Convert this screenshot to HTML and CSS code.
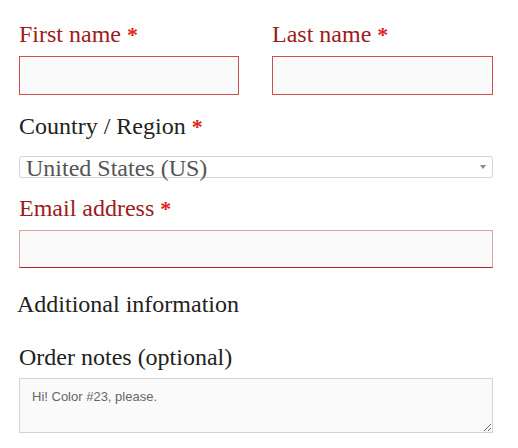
FILE: index.html
```html
<!DOCTYPE html>
<html lang="en">
<head>
    <meta charset="UTF-8">
    <meta name="viewport" content="width=device-width, initial-scale=1.0">
    <title>Checkout fields</title>
    <link rel="stylesheet" href="styles.css">
</head>
<body>
    <form class="checkout">
        <div class="name-row">
            <div class="field">
                <label class="field-label invalid" for="first-name">First name <abbr class="required">*</abbr></label>
                <input class="text-input invalid" id="first-name" type="text">
            </div>
            <div class="field">
                <label class="field-label invalid" for="last-name">Last name <abbr class="required">*</abbr></label>
                <input class="text-input invalid" id="last-name" type="text">
            </div>
        </div>

        <div class="field">
            <label class="field-label select-label">Country / Region <abbr class="required">*</abbr></label>
            <div class="select-box">
                <span class="select-value">United States (US)</span>
                <span class="select-arrow"></span>
            </div>
        </div>

        <div class="field">
            <label class="field-label invalid" for="email">Email address <abbr class="required">*</abbr></label>
            <input class="text-input email-input" id="email" type="email">
        </div>

        <h3 class="section-title">Additional information</h3>

        <div class="field">
            <label class="field-label notes-label" for="notes">Order notes (optional)</label>
            <textarea class="notes" id="notes">Hi! Color #23, please.</textarea>
        </div>
    </form>
</body>
</html>
```

FILE: styles.css
```css
/* Basic Reset */
* {
    margin: 0;
    padding: 0;
    box-sizing: border-box;
}

body {
    font-family: 'Liberation Serif', 'Times New Roman', serif;
    background: #fff;
    color: #222;
}

.checkout {
    width: 493px;
    padding: 19px 0 0 19px;
}

.name-row {
    display: grid;
    grid-template-columns: 220px 221px;
    column-gap: 33px;
    margin-bottom: 16px;
}

.field-label {
    display: block;
    height: 30px;
    font-size: 24px;
    line-height: 30px;
    color: #222;
    margin-bottom: 7px;
    white-space: nowrap;
}

.field-label.invalid {
    color: #9e1b1b;
}

.required {
    color: #e2231a;
    text-decoration: none;
    font-weight: bold;
    font-size: 22px;
    line-height: 1;
}

.text-input {
    display: block;
    width: 100%;
    height: 39px;
    background: #fafafa;
    border: 1px solid #cf4f4f;
    outline: none;
}

.select-label {
    margin-bottom: 15px;
}

.select-box {
    display: flex;
    align-items: flex-start;
    justify-content: space-between;
    height: 22px;
    padding: 0 6px;
    border: 1px solid #d4d4d4;
    border-radius: 3px;
    margin-bottom: 15px;
}

.select-value {
    font-size: 24px;
    line-height: 23px;
    color: #555;
    white-space: nowrap;
}

.select-arrow {
    width: 0;
    height: 0;
    margin-top: 8px;
    border-left: 3px solid transparent;
    border-right: 3px solid transparent;
    border-top: 4px solid #888;
}

.email-input {
    height: 38px;
    border-color: #dca3a3;
    border-bottom-color: #b32020;
}

.section-title {
    font-size: 24px;
    font-weight: normal;
    line-height: 30px;
    margin: 21px 0 23px -2px;
    color: #222;
}

.notes-label {
    margin-bottom: 6px;
}

.notes {
    display: block;
    width: 100%;
    height: 55px;
    padding: 10px 12px;
    font-family: 'Liberation Sans', Arial, sans-serif;
    font-size: 13px;
    color: #666;
    background: #fafafa;
    border: 1px solid #d4d4d4;
    outline: none;
}
```
